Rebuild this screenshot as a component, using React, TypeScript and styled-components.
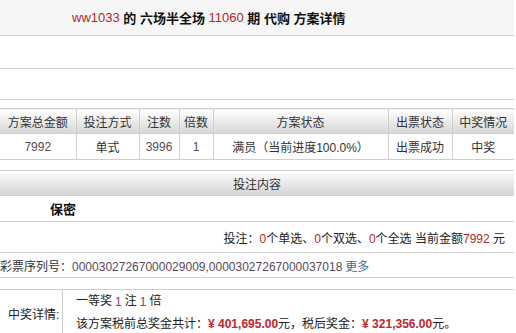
import React from "react";
import styled, { createGlobalStyle } from "styled-components";

const GlobalStyle = createGlobalStyle`
  html, body {
    margin: 0;
    padding: 0;
    background: #ffffff;
  }
  body {
    font-family: "Liberation Sans", Arial, "Noto Sans CJK SC", sans-serif;
    font-size: 12px;
    color: #333;
  }
`;

const colors = {
  line: "#cfcfcf",
  red: "#b3262b",
  num: "#5a4a5a",
  link: "#3f6f8f",
};

const StyledPage = styled.div`
  width: 514px;
  overflow: hidden;
`;

const StyledTitleBar = styled.div`
  height: 35px;
  background: #f6f6f6;
  border-bottom: 1px solid ${colors.line};
  display: flex;
  align-items: center;
  padding-left: 72px;
  font-size: 13px;
  font-weight: bold;
  color: #111;
`;

const StyledRed = styled.span`
  color: ${colors.red};
  font-weight: normal;
`;

const StyledBlank = styled.div<{ $h: number }>`
  height: ${(p) => p.$h}px;
  border-bottom: 1px solid ${colors.line};
`;

const StyledTable = styled.table`
  margin-top: 8px;
  width: 514px;
  border-collapse: collapse;
  table-layout: fixed;
  border-top: 1px solid ${colors.line};
  border-bottom: 1px solid ${colors.line};

  th,
  td {
    border-left: 1px solid ${colors.line};
    padding: 0;
    text-align: center;
    font-size: 12px;
    white-space: nowrap;
    color: #333;
  }
  th:first-child,
  td:first-child {
    border-left: none;
  }
  th {
    height: 24px;
    font-weight: normal;
    background: linear-gradient(#ffffff, #d6d6d6);
    border-bottom: 1px solid ${colors.line};
  }
  td {
    height: 25px;
  }
`;

const StyledNum = styled.span`
  color: ${colors.num};
`;

const StyledSectionBar = styled.div`
  margin-top: 10px;
  height: 24px;
  border-top: 1px solid ${colors.line};
  border-bottom: 1px solid ${colors.line};
  background: linear-gradient(#ffffff, #d4d4d4);
  display: flex;
  align-items: center;
  justify-content: center;
  color: #333;
`;

const StyledRow = styled.div<{ $h: number; $align?: string }>`
  height: ${(p) => p.$h}px;
  border-bottom: 1px solid ${colors.line};
  display: flex;
  align-items: center;
  justify-content: ${(p) => p.$align || "flex-start"};
`;

const StyledSecret = styled.div`
  padding-left: 50px;
  font-weight: bold;
  font-size: 13px;
  color: #111;
`;

const StyledBetInfo = styled.div`
  padding-right: 9px;
  font-size: 12px;
  color: #222;
`;

const StyledSerial = styled.div`
  color: #333;
`;

const StyledLink = styled.span`
  color: ${colors.link};
  margin-left: 3px;
`;

const StyledPrize = styled.div`
  margin-top: 11px;
  border-top: 1px solid ${colors.line};
  display: flex;
  height: 46px;
`;

const StyledPrizeLabel = styled.div`
  width: 63px;
  border-right: 1px solid ${colors.line};
  padding: 15px 0 0 8px;
  box-sizing: border-box;
  color: #222;
`;

const StyledPrizeBody = styled.div`
  padding-left: 13px;
  display: flex;
  flex-direction: column;
  gap: 6px;
  padding-top: 1px;
  color: #222;
`;

const StyledMoney = styled.b`
  color: #c0262b;
`;

const StyledPurple = styled.span`
  color: #8a3a78;
  margin: 0 3px;
  position: relative;
  top: 1px;
`;

const headers = ["方案总金额", "投注方式", "注数", "倍数", "方案状态", "出票状态", "中奖情况"];
const widths = [76, 63, 40, 34, 175, 64, 62];

const App: React.FC = () => {
  return (
    <StyledPage>
      <GlobalStyle />
      <StyledTitleBar>
        <StyledRed>ww1033</StyledRed>&nbsp;的 六场半全场&nbsp;<StyledRed>11060</StyledRed>&nbsp;期 代购 方案详情
      </StyledTitleBar>
      <StyledBlank $h={32} />
      <StyledBlank $h={30} />
      <StyledTable>
        <colgroup>
          {widths.map((w, i) => (
            <col key={i} style={{ width: w }} />
          ))}
        </colgroup>
        <thead>
          <tr>
            {headers.map((h) => (
              <th key={h}>{h}</th>
            ))}
          </tr>
        </thead>
        <tbody>
          <tr>
            <td><StyledNum>7992</StyledNum></td>
            <td>单式</td>
            <td><StyledNum>3996</StyledNum></td>
            <td><StyledNum>1</StyledNum></td>
            <td>满员（当前进度100.0%）</td>
            <td>出票成功</td>
            <td>中奖</td>
          </tr>
        </tbody>
      </StyledTable>
      <StyledSectionBar>投注内容</StyledSectionBar>
      <StyledRow $h={25}>
        <StyledSecret>保密</StyledSecret>
      </StyledRow>
      <StyledRow $h={30} $align="flex-end">
        <StyledBetInfo>
          投注：<StyledRed>0</StyledRed>个单选、<StyledRed>0</StyledRed>个双选、<StyledRed>0</StyledRed>个全选 当前金额<StyledRed>7992</StyledRed> 元
        </StyledBetInfo>
      </StyledRow>
      <StyledRow $h={24}>
        <StyledSerial>
          彩票序列号：<StyledNum>00003027267000029009,00003027267000037018</StyledNum>
          <StyledLink>更多</StyledLink>
        </StyledSerial>
      </StyledRow>
      <StyledPrize>
        <StyledPrizeLabel>中奖详情:</StyledPrizeLabel>
        <StyledPrizeBody>
          <div>
            一等奖<StyledPurple>1</StyledPurple>注<StyledPurple>1</StyledPurple>倍
          </div>
          <div>
            该方案税前总奖金共计：<StyledMoney>¥ 401,695.00</StyledMoney>元，税后奖金：<StyledMoney>¥ 321,356.00</StyledMoney>元。
          </div>
        </StyledPrizeBody>
      </StyledPrize>
    </StyledPage>
  );
};

export default App;
